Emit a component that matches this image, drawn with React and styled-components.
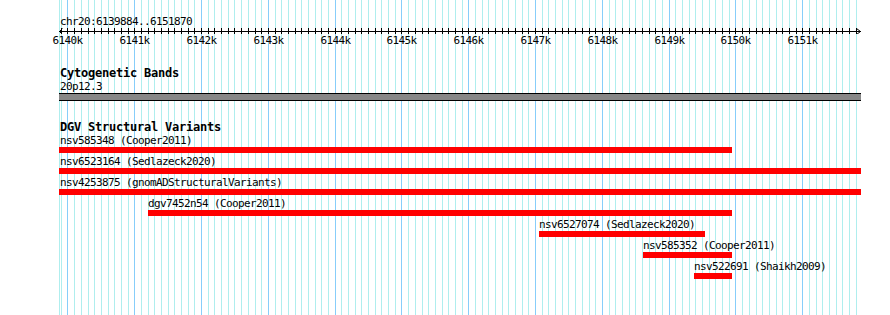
import React from 'react';
import styled, { createGlobalStyle } from 'styled-components';

const VIEW_START = 6139884;
const VIEW_END = 6151870;
const PX_PER_BP = 0.0668;
const ORIGIN = 60.25;
const TRACK_LEFT = 59;
const TRACK_RIGHT = 861;
const PAGE_W = 890;
const PAGE_H = 315;

const toX = (bp) => Math.floor(ORIGIN + (bp - VIEW_START) * PX_PER_BP);

const gridPositions = [];
for (let bp = Math.ceil(VIEW_START / 100) * 100; bp <= VIEW_END; bp += 100) {
  gridPositions.push({ bp, x: toX(bp), major: bp % 1000 === 0 });
}

const features = [
  { name: 'nsv585348', source: 'Cooper2011', x1: 59, x2: 732 },
  { name: 'nsv6523164', source: 'Sedlazeck2020', x1: 59, x2: 861 },
  { name: 'nsv4253875', source: 'gnomADStructuralVariants', x1: 59, x2: 861 },
  { name: 'dgv7452n54', source: 'Cooper2011', x1: 148, x2: 732 },
  { name: 'nsv6527074', source: 'Sedlazeck2020', x1: 539, x2: 705 },
  { name: 'nsv585352', source: 'Cooper2011', x1: 643, x2: 732 },
  { name: 'nsv522691', source: 'Shaikh2009', x1: 694, x2: 732 },
];

const GlobalStyle = createGlobalStyle`
  html, body { margin: 0; padding: 0; background: #ffffff; }
  body { font-family: "DejaVu Sans Mono", "Liberation Mono", monospace; color: #000; }
`;

const Page = styled.div`
  position: relative;
  width: ${PAGE_W}px;
  height: ${PAGE_H}px;
  overflow: hidden;
  background: #ffffff;
`;

const GridLayer = styled.svg`
  position: absolute;
  left: 0;
  top: 0;
  width: ${PAGE_W}px;
  height: ${PAGE_H}px;
  z-index: 0;
`;

const Content = styled.div`
  position: relative;
  z-index: 1;
  display: flex;
  flex-direction: column;
  padding-top: 15px;
`;

const SmallText = styled.div`
  font-family: "DejaVu Sans Mono", "Liberation Mono", monospace;
  font-size: 11px;
  letter-spacing: -0.62px;
  line-height: 13px;
  height: 13px;
  white-space: nowrap;
  color: #000;
`;

const TrackTitle = styled.div`
  font-family: "DejaVu Sans Mono", "Liberation Mono", monospace;
  font-weight: bold;
  font-size: 12px;
  letter-spacing: -0.22px;
  line-height: 13px;
  height: 13px;
  white-space: nowrap;
  margin-left: 60px;
  margin-top: ${(p) => p.$gap}px;
`;

const Location = styled(SmallText)`
  margin-left: 60px;
`;

const AxisSvg = styled.svg`
  display: block;
  width: ${PAGE_W}px;
  height: 6px;
`;

const TickLabels = styled.div`
  position: relative;
  height: 13px;
`;

const TickLabel = styled(SmallText)`
  position: absolute;
  top: 0;
  transform: translateX(-50%);
`;

const BandLabel = styled(SmallText)`
  margin-left: 60px;
`;

const Band = styled.div`
  margin-left: ${TRACK_LEFT}px;
  width: ${TRACK_RIGHT - TRACK_LEFT}px;
  height: 6px;
  border-top: 1px solid #000;
  border-bottom: 1px solid #000;
  background: #878787;
`;

const FeatureList = styled.div`
  display: flex;
  flex-direction: column;
`;

const FeatureRow = styled.div`
  display: flex;
  flex-direction: column;
  align-items: flex-start;
  height: 21px;
`;

const FeatureLabel = styled(SmallText)``;

const FeatureBar = styled.div`
  height: 6px;
  background: #ff0000;
`;

function Grid() {
  return (
    <GridLayer viewBox={`0 0 ${PAGE_W} ${PAGE_H}`} shapeRendering="crispEdges">
      <line x1={TRACK_LEFT + 0.5} y1={0} x2={TRACK_LEFT + 0.5} y2={PAGE_H} stroke="#afeeee" strokeWidth="1" />
      {gridPositions.map((g) => (
        <line
          key={g.bp}
          x1={g.x + 0.5}
          y1={0}
          x2={g.x + 0.5}
          y2={PAGE_H}
          stroke={g.major ? '#87cefa' : '#afeeee'}
          strokeWidth="1"
        />
      ))}
    </GridLayer>
  );
}

function Axis() {
  const y = 3.5;
  const right = TRACK_RIGHT - 1;
  return (
    <AxisSvg viewBox={`0 0 ${PAGE_W} 6`} shapeRendering="crispEdges">
      <line x1={TRACK_LEFT} y1={y} x2={right + 1} y2={y} stroke="#000" strokeWidth="1" />
      {gridPositions.map((g) => (
        <line key={g.bp} x1={g.x + 0.5} y1={0} x2={g.x + 0.5} y2={6} stroke="#000" strokeWidth="1" />
      ))}
      <polyline
        points={`${TRACK_LEFT + 3.5},0.5 ${TRACK_LEFT + 0.5},${y} ${TRACK_LEFT + 3.5},6.5`}
        fill="none"
        stroke="#000"
        strokeWidth="1"
        shapeRendering="auto"
      />
      <polyline
        points={`${right - 3.5},0.5 ${right + 0.5},${y} ${right - 3.5},6.5`}
        fill="none"
        stroke="#000"
        strokeWidth="1"
        shapeRendering="auto"
      />
    </AxisSvg>
  );
}

export default function App() {
  const majors = gridPositions.filter((g) => g.major);
  return (
    <>
      <GlobalStyle />
      <Page>
        <Grid />
        <Content>
          <Location>chr20:6139884..6151870</Location>
          <Axis />
          <TickLabels>
            {majors.map((g) => (
              <TickLabel key={g.bp} style={{ left: g.x + 0.5 }}>
                {`${g.bp / 1000}k`}
              </TickLabel>
            ))}
          </TickLabels>

          <TrackTitle $gap={20}>Cytogenetic Bands</TrackTitle>
          <BandLabel>20p12.3</BandLabel>
          <Band />

          <TrackTitle $gap={20}>DGV Structural Variants</TrackTitle>
          <FeatureList>
            {features.map((f) => (
              <FeatureRow key={f.name}>
                <FeatureLabel style={{ marginLeft: Math.max(f.x1, 60) }}>
                  {`${f.name} (${f.source})`}
                </FeatureLabel>
                <FeatureBar style={{ marginLeft: f.x1, width: f.x2 - f.x1 }} />
              </FeatureRow>
            ))}
          </FeatureList>
        </Content>
      </Page>
    </>
  );
}
